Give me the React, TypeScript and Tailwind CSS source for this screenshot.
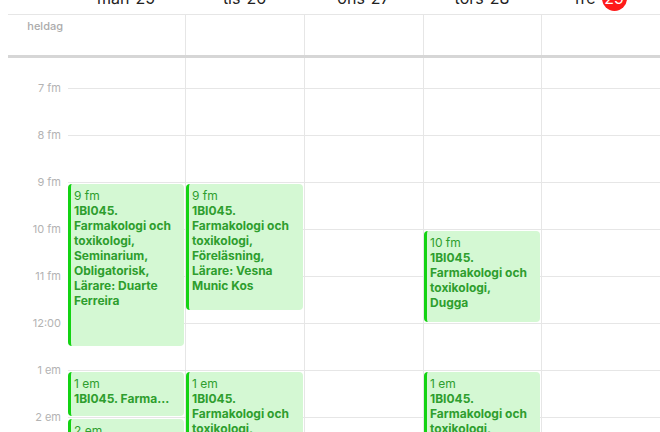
import React from "react";

type CalEvent = {
  day: number;
  start: number;
  end: number;
  time: string;
  title: string;
  truncate?: boolean;
};

const HOUR = 47;
const FIRST_LINE = 30; // distance from top of grid to the "7 fm" line

const days = [
  { name: "mån", date: "25" },
  { name: "tis", date: "26" },
  { name: "ons", date: "27" },
  { name: "tors", date: "28" },
  { name: "fre", date: "29", today: true },
];

const hours = ["7 fm", "8 fm", "9 fm", "10 fm", "11 fm", "12:00", "1 em", "2 em"];

const events: CalEvent[] = [
  {
    day: 0,
    start: 9,
    end: 12.5,
    time: "9 fm",
    title: "1BI045. Farmakologi och toxikologi, Seminarium, Obligatorisk, Lärare: Duarte Ferreira",
  },
  {
    day: 1,
    start: 9,
    end: 11.75,
    time: "9 fm",
    title: "1BI045. Farmakologi och toxikologi, Föreläsning, Lärare: Vesna Munic Kos",
  },
  {
    day: 3,
    start: 10,
    end: 12,
    time: "10 fm",
    title: "1BI045. Farmakologi och toxikologi, Dugga",
  },
  {
    day: 0,
    start: 13,
    end: 14,
    time: "1 em",
    title: "1BI045. Farmakologi och toxikologi, Seminarium",
    truncate: true,
  },
  {
    day: 0,
    start: 14,
    end: 15,
    time: "2 em",
    title: "1BI045. Farmakologi och toxikologi, Seminarium",
    truncate: true,
  },
  {
    day: 1,
    start: 13,
    end: 15,
    time: "1 em",
    title: "1BI045. Farmakologi och toxikologi, Föreläsning, Lärare: Vesna Munic Kos",
  },
  {
    day: 3,
    start: 13,
    end: 15,
    time: "1 em",
    title: "1BI045. Farmakologi och toxikologi, Laboration, Obligatorisk",
  },
];

const cols = "grid grid-cols-[118px_119px_119px_118px_119px]";

function EventBlock({ ev }: { ev: CalEvent }) {
  const top = FIRST_LINE + (ev.start - 7) * HOUR + 2;
  const height = (ev.end - ev.start) * HOUR - 3;
  return (
    <div
      className="absolute left-0 right-[1px] overflow-hidden rounded-[4px] border-l-[3px] border-[#13d313] bg-[#d4f8d3] pl-[3px] pr-[9px] pt-[4px] text-[12px] leading-[15px] text-[#2e9e2e]"
      style={{ top, height }}
    >
      <div>{ev.time}</div>
      <div className={ev.truncate ? "truncate font-bold" : "font-bold"}>{ev.title}</div>
    </div>
  );
}

export default function App() {
  return (
    <div className="flex h-[432px] w-[660px] flex-col overflow-hidden bg-white font-['Inter',sans-serif]">
      {/* day header, scrolled so only the bottom of the labels shows */}
      <div className="flex h-[14px] shrink-0">
        <div className="w-[67px]" />
        <div className={cols}>
          {days.map((d) => (
            <div
              key={d.name}
              className="-mt-[10px] flex h-[16px] items-center justify-center gap-[6px] text-[16px] leading-[16px] text-[#222]"
            >
              <span>{d.name}</span>
              {d.today ? (
                <span className="flex h-[25px] w-[25px] items-center justify-center rounded-full bg-[#fe1a1a] text-white">
                  {d.date}
                </span>
              ) : (
                <span>{d.date}</span>
              )}
            </div>
          ))}
        </div>
      </div>

      {/* all-day row */}
      <div className="ml-2 flex h-[44px] shrink-0 border-b-[3px] border-t border-b-[#d6d6d6] border-t-[#e6e6e6]">
        <div className="w-[59px] pr-[4px] pt-[5px] text-right text-[11px] font-medium leading-[12px] text-[#ababab]">
          heldag
        </div>
        <div className={cols}>
          {days.map((d, i) => (
            <div key={d.name} className={i === 0 ? "" : "border-l border-[#e6e6e6]"} />
          ))}
        </div>
      </div>

      {/* time grid */}
      <div className="flex min-h-0 flex-1 overflow-hidden">
        <div className="w-[67px] shrink-0">
          <div className="h-[30px]" />
          {hours.map((h) => (
            <div key={h} className="h-[47px] pr-[6px] text-right">
              <div className="-translate-y-1/2 text-[11px] leading-[12px] text-[#b3b3b3]">{h}</div>
            </div>
          ))}
        </div>
        <div className={cols + " h-fit"}>
          {days.map((d, i) => (
            <div
              key={d.name}
              className={
                "relative border-l " + (i === 0 ? "border-l-transparent" : "border-l-[#e6e6e6]")
              }
            >
              <div className="h-[30px]" />
              {hours.map((h) => (
                <div key={h} className="h-[47px] border-t border-[#e6e6e6]" />
              ))}
              {events
                .filter((e) => e.day === i)
                .map((e, k) => (
                  <EventBlock key={k} ev={e} />
                ))}
            </div>
          ))}
        </div>
      </div>
    </div>
  );
}
